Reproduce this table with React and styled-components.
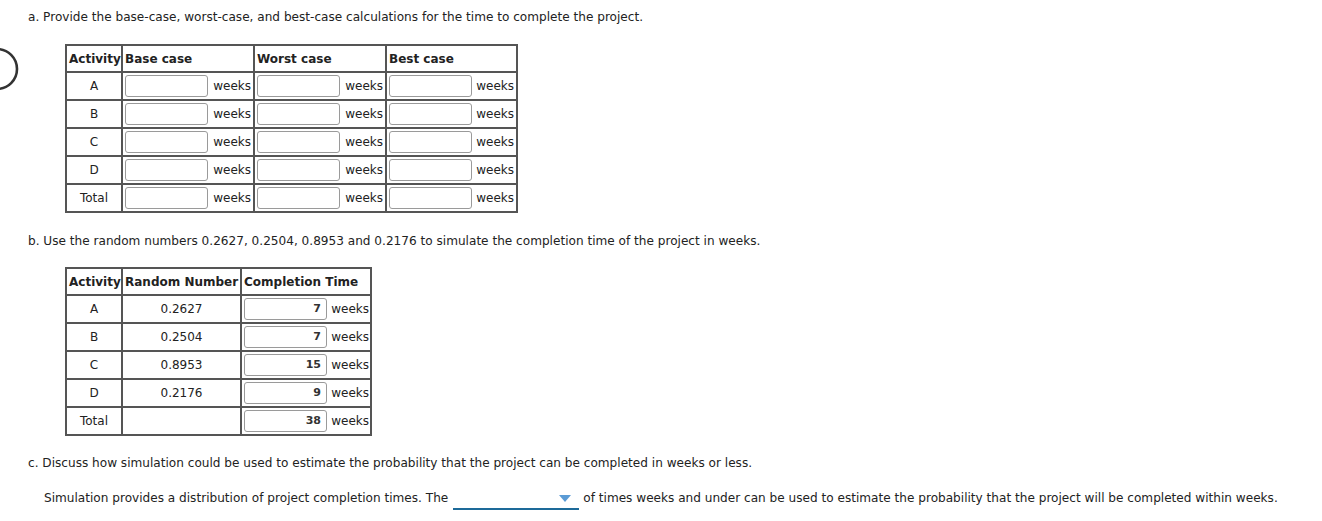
import React from "react";
import styled, { createGlobalStyle } from "styled-components";

const GlobalStyle = createGlobalStyle`
  * { box-sizing: border-box; }
  body {
    margin: 0;
    background: #fff;
    color: #222;
    font-family: "DejaVu Sans", Verdana, sans-serif;
    font-size: 12px;
  }
`;

const Page = styled.div`
  position: relative;
  width: 1322px;
  height: 521px;
  padding: 9px 0 0 28px;
  overflow: hidden;
`;

const Ring = styled.svg`
  position: absolute;
  left: 0;
  top: 46px;
`;

const Para = styled.p`
  margin: 0;
  line-height: 16px;
  white-space: nowrap;
  font-size: 12.1px;
  margin-top: ${p => p.top || 0}px;
`;

const Grid = styled.table`
  margin: ${p => p.top}px 0 0 37px;
  border: 1px solid #555;
  border-spacing: 0;
  table-layout: fixed;
  width: ${p => p.width}px;
`;

const Th = styled.th`
  border: 1px solid #555;
  height: 27px;
  padding: 0 2px;
  font-weight: bold;
  text-align: left;
  white-space: nowrap;
  width: ${p => p.w}px;
`;

const Td = styled.td`
  border: 1px solid #555;
  height: 28px;
  padding: 0 ${p => (p.tight ? 1 : 2)}px 0 2px;
  text-align: ${p => p.align || "left"};
  white-space: nowrap;
`;

const AnswerCell = styled.div`
  display: flex;
  align-items: center;
  justify-content: space-between;
`;

const Box = styled.span`
  display: inline-block;
  width: 83px;
  height: 22px;
  border: 1px solid #9a9a9a;
  border-radius: 3px;
  background: #fff;
  text-align: right;
  padding: 0 5px;
  line-height: 20px;
  font-size: 11px;
  font-weight: bold;
  color: #333;
`;

const Sentence = styled.div`
  display: flex;
  align-items: center;
  margin-top: 16px;
  padding-left: 16px;
  white-space: nowrap;
  font-size: 12.1px;
`;

const Dropdown = styled.span`
  position: relative;
  display: inline-block;
  width: 126px;
  height: 22px;
  margin: 0 4px 0 5px;
  border-bottom: 2px solid #1d6a99;
  top: 1px;
`;

const Caret = styled.span`
  position: absolute;
  right: 8px;
  top: 7px;
  width: 0;
  height: 0;
  border-left: 6px solid transparent;
  border-right: 6px solid transparent;
  border-top: 7px solid #5b9bd5;
`;

const rows = ["A", "B", "C", "D", "Total"];
const sim = [
  { id: "A", r: "0.2627", t: "7" },
  { id: "B", r: "0.2504", t: "7" },
  { id: "C", r: "0.8953", t: "15" },
  { id: "D", r: "0.2176", t: "9" },
  { id: "Total", r: "", t: "38" }
];

function Answer({ value }) {
  return (
    <AnswerCell>
      <Box>{value}</Box>
      <span>weeks</span>
    </AnswerCell>
  );
}

export default function App() {
  return (
    <Page>
      <GlobalStyle />
      <Ring width="24" height="48" viewBox="0 0 24 48">
        <circle cx="-3" cy="23" r="20" fill="none" stroke="#333" strokeWidth="2.6" />
      </Ring>

      <Para>a. Provide the base-case, worst-case, and best-case calculations for the time to complete the project.</Para>

      <Grid top={19} width={453}>
        <thead>
          <tr>
            <Th w={56}>Activity</Th>
            <Th w={132}>Base case</Th>
            <Th w={132}>Worst case</Th>
            <Th w={131}>Best case</Th>
          </tr>
        </thead>
        <tbody>
          {rows.map(r => (
            <tr key={r}>
              <Td align="center">{r}</Td>
              <Td><Answer /></Td>
              <Td><Answer /></Td>
              <Td><Answer /></Td>
            </tr>
          ))}
        </tbody>
      </Grid>

      <Para top={20}>b. Use the random numbers 0.2627, 0.2504, 0.8953 and 0.2176 to simulate the completion time of the project in weeks.</Para>

      <Grid top={18} width={307}>
        <thead>
          <tr>
            <Th w={56}>Activity</Th>
            <Th w={119}>Random Number</Th>
            <Th w={130}>Completion Time</Th>
          </tr>
        </thead>
        <tbody>
          {sim.map(s => (
            <tr key={s.id}>
              <Td align="center">{s.id}</Td>
              <Td align="center">{s.r}</Td>
              <Td tight><Answer value={s.t} /></Td>
            </tr>
          ))}
        </tbody>
      </Grid>

      <Para top={19}>c. Discuss how simulation could be used to estimate the probability that the project can be completed in weeks or less.</Para>

      <Sentence>
        Simulation provides a distribution of project completion times. The
        <Dropdown><Caret /></Dropdown>
        of times weeks and under can be used to estimate the probability that the project will be completed within weeks.
      </Sentence>
    </Page>
  );
}
